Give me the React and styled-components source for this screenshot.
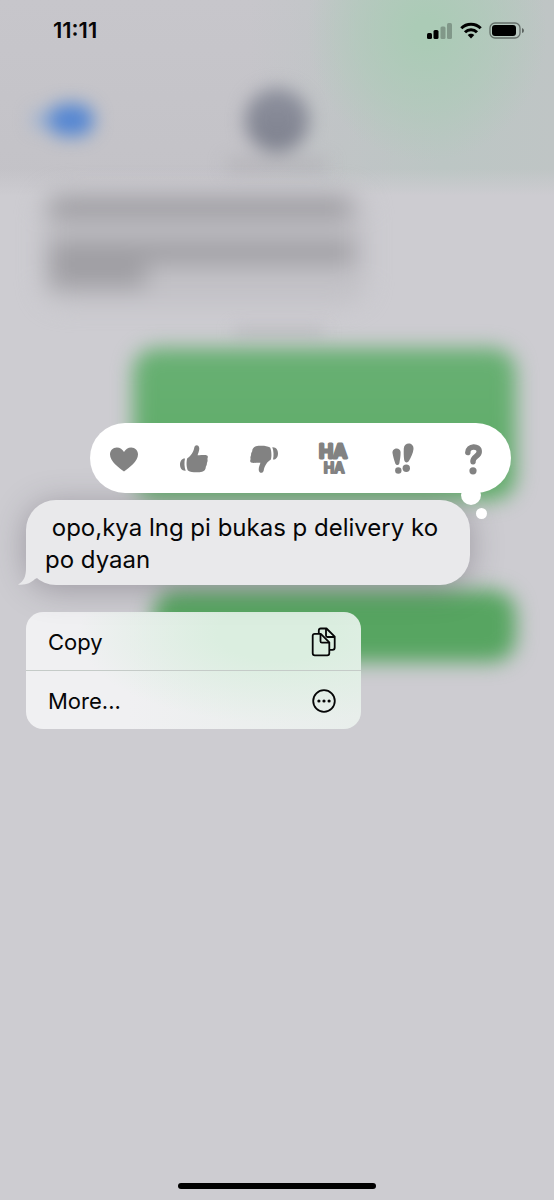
import React from "react";
import styled, { createGlobalStyle } from "styled-components";

const GlobalStyle = createGlobalStyle`
  *, *::before, *::after { box-sizing: border-box; }
  body {
    margin: 0;
    background: #cdccd1;
    color: #060607;
    font-family: Inter, "Liberation Sans", sans-serif;
  }
  button { font: inherit; color: inherit; border: 0; background: none; padding: 0; cursor: pointer; }
  svg { display: block; overflow: visible; }
`;

const Screen = styled.div`
  position: relative;
  display: flex;
  flex-direction: column;
  min-height: 100vh;
  overflow: hidden;
`;

/* Blurred conversation that sits behind the message actions */
const Backdrop = styled.div`
  position: absolute;
  inset: 0;
  overflow: hidden;
`;

const BlurredHeader = styled.div`
  height: 196px;
  padding: 88px 32px 0;
  display: grid;
  grid-template-columns: 1fr 120px 1fr;
  align-items: start;
  background:
    linear-gradient(#cdccd100 86%, #cdccd1),
    radial-gradient(ellipse 120px 130px at 77% 16%, #abcbb6 10%, #abcbb680 60%, #abcbb600 100%),
    linear-gradient(90deg, #c5c4c900 45%, #bcc6c4 80%, #bfc5c5),
    linear-gradient(#c7c6cb, #c3c2c7);
`;

const BlurredBack = styled.div`
  display: flex;
  align-items: center;
  height: 64px;
  filter: blur(9px);
  &::before { content: ""; width: 16px; height: 18px; border-radius: 9px; background: #9db2d2; }
  &::after { content: ""; width: 46px; height: 32px; border-radius: 16px; background: #5486d2; }
`;

const BlurredContact = styled.div`
  display: flex;
  flex-direction: column;
  align-items: center;
  gap: 8px;
  filter: blur(9px);
  &::before { content: ""; width: 64px; height: 64px; border-radius: 50%; background: linear-gradient(#8d909d, #7d808d); }
  &::after { content: ""; width: 100px; height: 10px; background: #b0afb4; }
`;

const BlurredThread = styled.div`
  display: flex;
  flex-direction: column;
  margin-top: -12px;
  padding: 8px 38px 0 42px;
`;

const BlurredIncoming = styled.div`
  display: flex;
  flex-direction: column;
  align-items: flex-start;
  width: 324px;
  height: 112px;
  padding: 6px 8px;
  border-radius: 24px;
  background: #c2c1c6;
  filter: blur(12px);
`;

const BlurredLine = styled.div`
  width: ${(p) => p.$width}px;
  height: 20px;
  margin-bottom: ${(p) => p.$gap || 4}px;
  background: #99989d;
`;

const BlurredDate = styled.div`
  align-self: center;
  width: 90px;
  height: 8px;
  margin-top: 24px;
  background: #b9b8bd;
  filter: blur(8px);
`;

const BlurredOutgoing = styled.div`
  align-self: flex-end;
  width: ${(p) => p.$width}px;
  height: ${(p) => p.$height}px;
  margin-top: ${(p) => p.$top}px;
  border-radius: 24px;
  background: ${(p) => p.$fill};
  filter: blur(10px);
`;

const Foreground = styled.div`
  position: relative;
  flex: 1;
  display: flex;
  flex-direction: column;
`;

const StatusBar = styled.header`
  display: flex;
  align-items: center;
  justify-content: space-between;
  height: 60px;
  padding: 0 29px 0 53px;
`;

const Time = styled.time`
  font-size: 22px;
  line-height: 24px;
  font-weight: 600;
`;

const StatusIcons = styled.div`
  display: flex;
  align-items: center;
  gap: 7px;
`;

const Focus = styled.main`
  flex: 1;
  display: flex;
  flex-direction: column;
  align-items: flex-start;
  padding: 363px 43px 40px 26px;
`;

const Reactions = styled.div`
  position: relative;
  z-index: 1;
  align-self: stretch;
  display: flex;
  align-items: center;
  justify-content: space-between;
  height: 70px;
  margin-left: 64px;
  padding: 2px 18px 0 14px;
  border-radius: 35px;
  background: #fff;
  &::before, &::after { content: ""; position: absolute; border-radius: 50%; background: #fff; }
  &::before { width: 20px; height: 20px; right: 30px; bottom: -12px; }
  &::after { width: 11px; height: 11px; right: 24px; bottom: -26px; }
`;

const Reaction = styled.button`
  display: grid;
  place-items: center;
  width: 40px;
  height: 40px;
  color: #828282;
`;

const Bubble = styled.div`
  position: relative;
  width: 444px;
  max-width: 100%;
  margin-top: 7px;
  padding: 12px 19px 9px;
  border-radius: 30px;
  background: #e9e9eb;
  box-shadow: 0 4px 32px rgba(70, 60, 75, 0.36);
  font-size: 24px;
  line-height: 32px;
  white-space: pre-wrap;
  p { position: relative; margin: 0; }
`;

const Tail = styled.svg`
  position: absolute;
  left: -8px;
  bottom: 0;
`;

const Menu = styled.div`
  width: 335px;
  margin-top: 27px;
  border-radius: 17px;
  overflow: hidden;
  background:
    radial-gradient(ellipse 200px 90px at 75% 18%, #dbeee0 30%, #dbeee000 100%),
    linear-gradient(90deg, #f0f0f2 30%, #e8eeeb);
`;

const MenuItem = styled.button`
  display: flex;
  align-items: center;
  justify-content: space-between;
  width: 100%;
  height: 58px;
  padding: 1px 24px 0 22px;
  font-size: 22px;
  line-height: 28px;
  & + & { height: 59px; border-top: 1px solid #c5cbc8; }
`;

const HomeIndicator = styled.div`
  align-self: center;
  width: 198px;
  height: 6px;
  margin-bottom: 11px;
  border-radius: 3px;
  background: #000;
`;

function Signal() {
  return (
    <svg width="26" height="17" viewBox="0 0 26 17" fill="#000">
      <rect x="0" y="11" width="5" height="6" rx="1.5" />
      <rect x="6.5" y="8" width="5" height="9" rx="1.5" />
      <rect x="13.5" y="4.500" width="5" height="12.500" rx="1.5" opacity=".25" />
      <rect x="20" y="1" width="5" height="16" rx="1.5" opacity=".25" />
    </svg>
  );
}

function Wifi() {
  return (
    <svg width="22" height="17" viewBox="0 0 22 17" fill="none" stroke="#000" strokeWidth="3">
      <path d="M1.300 6.300C6.700 .9 15.300 .9 20.700 6.300" />
      <path d="M5 10.300C8.300 7 13.700 7 17 10.300" />
      <path d="M11 16.500L7.700 13.100C9.500 11.300 12.500 11.300 14.300 13.100Z" fill="#000" stroke="none" />
    </svg>
  );
}

function Battery() {
  return (
    <svg width="36" height="17" viewBox="0 0 36 17">
      <rect x="1" y="1" width="30" height="15" rx="5" fill="none" stroke="#000" strokeOpacity=".45" strokeWidth="1.300" />
      <rect x="3" y="3" width="24" height="11" rx="3" fill="#000" />
      <path d="M33 6Q35 6.500 35 8.500T33 11Z" fill="#000" opacity=".5" />
    </svg>
  );
}

function Heart() {
  return (
    <svg width="32" height="32" viewBox="0 0 32 32" fill="currentColor">
      <path d="M16 28.500C11 24.500 2 18.500 2 11.500C2 7.500 4.900 4.500 8.800 4.500C12 4.500 14.500 6.300 16 9C17.500 6.300 20 4.500 23.200 4.500C27.100 4.500 30 7.500 30 11.500C30 18.500 21 24.500 16 28.500Z" />
    </svg>
  );
}

function ThumbShape() {
  return (
    <>
      <path d="M9.300 15.200C12.500 13.600 15.500 9.200 16.300 4.500C17 1 21.300 1.500 21.300 5.500C21.300 8 20 10.500 19.600 12.200C22.500 12.500 27 11.600 29 12.500C30.300 13 29.800 14.800 29.400 16C30 17.500 29.300 19 28.900 20C29.100 21.500 28.400 22.800 27.800 23.700C27.800 27 25.500 29 21.500 29.200C17.500 29.600 13 29.400 9.900 27.500C8.400 24.500 8.100 18.500 9.300 15.200Z" />
      <path d="M7 15.500C4 15.300 2 18 2 21.600C2 25.300 4.100 28.200 7.700 27.800C6.300 24.500 6.100 19.200 7 15.500Z" />
    </>
  );
}

function ThumbUp() {
  return (
    <svg width="32" height="32" viewBox="0 0 32 32" fill="currentColor"><ThumbShape /></svg>
  );
}

function ThumbDown() {
  return (
    <svg width="32" height="32" viewBox="0 0 32 32" fill="currentColor">
      <g transform="rotate(180 16 16)"><ThumbShape /></g>
    </svg>
  );
}

function HaHa() {
  return (
    <svg width="36" height="34" viewBox="0 0 36 34" fill="currentColor" stroke="currentColor" strokeLinejoin="round" fontFamily="Inter, sans-serif" fontWeight="600" textAnchor="middle">
      <text x="18" y="16" fontSize="19" strokeWidth="3">HA</text>
      <text x="19" y="31" fontSize="14" strokeWidth="2">HA</text>
    </svg>
  );
}

function Emphasis() {
  return (
    <svg width="32" height="34" viewBox="0 0 32 34" fill="currentColor">
      <path d="M5.500 11C4.800 5.500 13.300 4.600 13.600 10C13.700 14 12.900 18 12.400 21C12 23.600 9 23.800 8.200 21.300C7.200 18 6 14.500 5.500 11Z" />
      <circle cx="11.300" cy="28.500" r="3.200" />
      <path d="M16.800 6.500C17.200 -.5 27 0 26.500 7C26.100 11.500 23.800 15.500 22 18.800C20.600 21.200 17.700 20.800 17.200 18C16.700 14.500 16.600 10.500 16.800 6.500Z" />
      <circle cx="19.300" cy="26.300" r="3.700" />
    </svg>
  );
}

function Question() {
  return (
    <svg width="32" height="34" viewBox="0 0 32 34" fill="none" stroke="currentColor" strokeWidth="5.500" strokeLinecap="round" strokeLinejoin="round">
      <path d="M10.800 10.500C10.500 3.500 22.500 3 22.200 9.800C22 14.500 15.500 14.500 16 19.800" />
      <circle cx="16" cy="28.800" r="3.600" fill="currentColor" stroke="none" />
    </svg>
  );
}

function CopyIcon() {
  return (
    <svg width="26" height="30" viewBox="0 0 26 30" fill="none" stroke="currentColor" strokeWidth="1.800" strokeLinejoin="round">
      <path d="M7.800 6.500V3.500Q7.800 1.500 9.800 1.500H15.500L23.700 9.700V20.500Q23.700 22.800 21.500 22.800H18.500" />
      <path d="M15 1.800V8.500Q15 10 16.500 10H23.500" />
      <path d="M3.700 6.800H9.800L18.300 15.300V26.300Q18.300 28.300 16.300 28.300H3.700Q1.700 28.300 1.700 26.300V8.800Q1.700 6.800 3.700 6.800Z" />
      <path d="M9.500 7V14.200Q9.500 15.700 11 15.700H18" />
    </svg>
  );
}

function MoreIcon() {
  return (
    <svg width="26" height="26" viewBox="0 0 26 26" fill="none">
      <circle cx="13" cy="13" r="10.800" stroke="currentColor" strokeWidth="1.800" />
      <g fill="currentColor">
        <circle cx="7.900" cy="13" r="1.600" />
        <circle cx="13" cy="13" r="1.600" />
        <circle cx="18.100" cy="13" r="1.600" />
      </g>
    </svg>
  );
}

const reactions = [
  ["Love", Heart],
  ["Like", ThumbUp],
  ["Dislike", ThumbDown],
  ["Laugh", HaHa],
  ["Emphasize", Emphasis],
  ["Question", Question],
];

export default function App() {
  return (
    <Screen>
      <GlobalStyle />
      <Backdrop aria-hidden="true">
        <BlurredHeader>
          <BlurredBack />
          <BlurredContact />
        </BlurredHeader>
        <BlurredThread>
          <BlurredIncoming>
            <BlurredLine $width={300} $gap={24} />
            <BlurredLine $width={304} />
            <BlurredLine $width={96} />
          </BlurredIncoming>
          <BlurredDate />
          <BlurredOutgoing $width={383} $height={152} $top={12} $fill="linear-gradient(#68b073, #5dab66)" />
          <BlurredOutgoing $width={363} $height={72} $top={90} $fill="#57a561" />
        </BlurredThread>
      </Backdrop>
      <Foreground>
        <StatusBar>
          <Time>11:11</Time>
          <StatusIcons>
            <Signal />
            <Wifi />
            <Battery />
          </StatusIcons>
        </StatusBar>
        <Focus>
          <Reactions>
            {reactions.map(([label, Icon]) => (
              <Reaction key={label} type="button" aria-label={label}>
                <Icon />
              </Reaction>
            ))}
          </Reactions>
          <Bubble>
            <Tail width="30" height="32" viewBox="0 0 30 32" fill="#e9e9eb">
              <path d="M8 0V15C8 23 6 28.500 0 31.500C7 32.500 13 30 17 26L30 20V0Z" />
            </Tail>
            <p>{" opo,kya lng pi bukas p delivery ko po dyaan"}</p>
          </Bubble>
          <Menu>
            <MenuItem type="button">
              Copy
              <CopyIcon />
            </MenuItem>
            <MenuItem type="button">
              More...
              <MoreIcon />
            </MenuItem>
          </Menu>
        </Focus>
        <HomeIndicator />
      </Foreground>
    </Screen>
  );
}
